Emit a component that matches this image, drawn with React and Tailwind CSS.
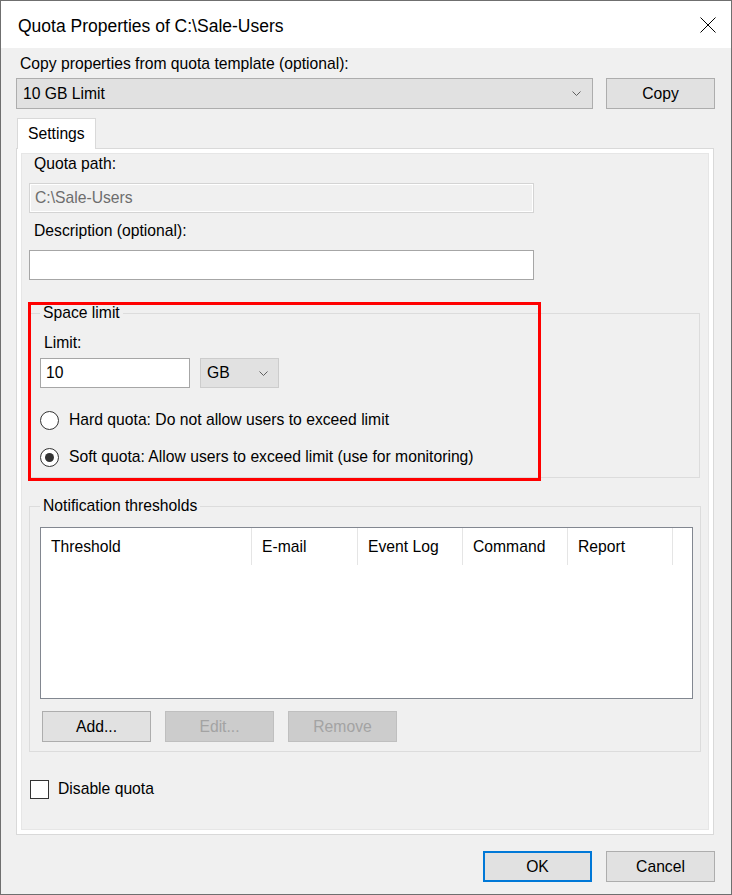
function Chevron() {
  return (
    <svg width="9" height="5" viewBox="0 0 9 5" className="shrink-0">
      <polyline points="0.5,0.5 4.5,4.5 8.5,0.5" fill="none" stroke="#5f5f5f" strokeWidth="1" />
    </svg>
  );
}

function Button({ children, disabled, primary, className = "" }) {
  let look = "bg-[#e1e1e1] border border-[#adadad] text-black";
  if (disabled) look = "bg-[#cccccc] border border-[#bfbfbf] text-[#a3a3a3]";
  if (primary) look = "bg-[#e1e1e1] border-2 border-[#0078d7] text-black";
  return (
    <div className={`flex items-center justify-center h-[31px] w-[109px] ${look} ${className}`}>
      {children}
    </div>
  );
}

function Radio({ checked, label, className = "" }) {
  return (
    <div className={`flex items-center h-[20px] ${className}`}>
      <div className="w-[19px] h-[19px] rounded-full border border-[#333333] bg-white flex items-center justify-center">
        {checked && <div className="w-[9px] h-[9px] rounded-full bg-[#333333]" />}
      </div>
      <span className="ml-[10px]">{label}</span>
    </div>
  );
}

export default function App() {
  const columns = [
    { name: "Threshold", w: "w-[211px]" },
    { name: "E-mail", w: "w-[106px]" },
    { name: "Event Log", w: "w-[105px]" },
    { name: "Command", w: "w-[105px]" },
    { name: "Report", w: "w-[105px]" },
  ];

  return (
    <div
      className="w-[732px] h-[895px] border border-[#6f6f6f] bg-[#f0f0f0] text-[15.7px] leading-[20px] text-black overflow-hidden"
      style={{ fontFamily: '"Liberation Sans", Arial, sans-serif' }}
    >
      {/* title bar */}
      <div className="h-[47px] bg-white flex items-center justify-between pl-[17px] pr-[15px]">
        <span className="text-[17.5px] pt-[2px]">Quota Properties of C:\Sale-Users</span>
        <svg width="16" height="16" viewBox="0 0 16 16">
          <path d="M0.5 0.5 L15.5 15.5 M15.5 0.5 L0.5 15.5" stroke="#000" strokeWidth="1" />
        </svg>
      </div>

      <div className="px-[15px]">
        <div className="pt-[6px] h-[25px] pl-[4px]">Copy properties from quota template (optional):</div>

        <div className="flex mt-[5px] gap-[13px]">
          <div className="w-[577px] h-[31px] bg-[#e1e1e1] border border-[#adadad] flex items-center justify-between pl-[6px] pr-[11px]">
            <span>10 GB Limit</span>
            <Chevron />
          </div>
          <Button className="w-[108px]">Copy</Button>
        </div>

        {/* tab */}
        <div className="mt-[9px] ml-[1px] w-[79px] h-[31px] bg-white border border-b-0 border-[#d9d9d9] flex items-center pl-[10px] relative z-10">
          Settings
        </div>

        <div className="-mt-[1px] w-[698px] h-[687px] border border-[#d9d9d9] bg-white p-[4px]">
          <div className="h-full bg-[#f0f0f0] border border-[#e6e6e6] flex flex-col">
            <div className="pl-[12px]">Quota path:</div>
            <div className="mt-[9px] ml-[7px] w-[505px] h-[30px] border border-[#d4d4d4] shadow-[inset_0_0_0_1px_#ffffff] flex items-center pl-[5px] text-[#6d6d6d]">
              C:\Sale-Users
            </div>

            <div className="mt-[8px] pl-[12px]">Description (optional):</div>
            <div className="mt-[9px] ml-[7px] w-[505px] h-[30px] border border-[#a6a6a6] bg-white" />

            {/* space limit */}
            <div className="relative mt-[23px] ml-[7px] w-[671px]">
              <fieldset className="border border-[#dcdcdc] px-[10px] pt-[10px] pb-[10px] m-0">
                <legend className="px-[3px] h-[20px]">Space limit</legend>
                <div className="pl-[4px]">Limit:</div>
                <div className="flex mt-[5px] gap-[10px]">
                  <div className="w-[150px] h-[30px] bg-white border border-[#a6a6a6] flex items-center pl-[5px]">10</div>
                  <div className="w-[79px] h-[30px] bg-[#e1e1e1] border border-[#cccccc] flex items-center justify-between pl-[6px] pr-[10px]">
                    <span>GB</span>
                    <Chevron />
                  </div>
                </div>
                <Radio className="mt-[22px]" label="Hard quota: Do not allow users to exceed limit" />
                <Radio checked className="mt-[17px]" label="Soft quota: Allow users to exceed limit (use for monitoring)" />
              </fieldset>
              <div className="absolute -left-[1px] -top-[1px] w-[513px] h-[179px] border-[3px] border-[#ff0000] pointer-events-none" />
            </div>

            {/* notification thresholds */}
            <div className="mt-[18px] ml-[7px] w-[672px]">
              <fieldset className="border border-[#dcdcdc] pl-[10px] pr-[7px] pt-[11px] pb-[9px] m-0 min-w-0">
                <legend className="px-[3px] h-[20px]">Notification thresholds</legend>
                <div className="w-[653px] h-[172px] bg-white border border-[#828790]">
                  <div className="flex h-[37px]">
                    {columns.map((c) => (
                      <div key={c.name} className={`${c.w} h-full border-r border-[#e5e5e5] flex items-center pl-[10px]`}>
                        {c.name}
                      </div>
                    ))}
                  </div>
                </div>
                <div className="flex mt-[12px] ml-[2px] gap-[14px]">
                  <Button>Add...</Button>
                  <Button disabled>Edit...</Button>
                  <Button disabled>Remove</Button>
                </div>
              </fieldset>
            </div>

            <div className="flex items-center h-[20px] mt-[27px] ml-[8px]">
              <div className="w-[19px] h-[19px] border border-[#333333] bg-white" />
              <span className="ml-[9px]">Disable quota</span>
            </div>
          </div>
        </div>

        <div className="flex justify-end gap-[14px] mt-[16px] pr-[1px]">
          <Button primary className="h-[30px]">OK</Button>
          <Button className="h-[30px]">Cancel</Button>
        </div>
      </div>
    </div>
  );
}
